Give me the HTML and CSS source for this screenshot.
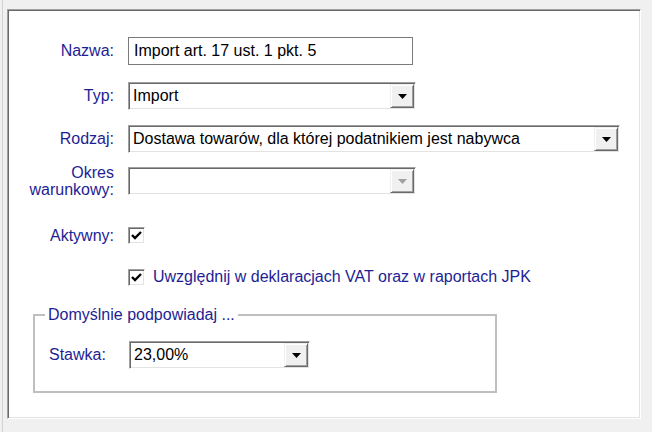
FILE: index.html
```html
<!DOCTYPE html>
<html lang="pl">
<head>
<meta charset="utf-8">
<title>Rejestr VAT</title>
<link rel="stylesheet" href="styles.css">
</head>
<body>
<div class="window">
  <div class="edge"></div>
  <div class="panel">
    <div class="form">
      <div class="lbl">Nazwa:</div>
      <div class="edit w-name">Import art. 17 ust. 1 pkt. 5</div>

      <div class="lbl">Typ:</div>
      <div class="combo w-typ">
        <span class="val">Import</span>
        <span class="btn"><svg width="9" height="5" viewBox="0 0 9 5"><polygon points="0,0 9,0 4.5,5" fill="#000"/></svg></span>
      </div>

      <div class="lbl">Rodzaj:</div>
      <div class="combo w-rodzaj">
        <span class="val">Dostawa towarów, dla której podatnikiem jest nabywca</span>
        <span class="btn"><svg width="9" height="5" viewBox="0 0 9 5"><polygon points="0,0 9,0 4.5,5" fill="#000"/></svg></span>
      </div>

      <div class="lbl two">Okres<br>warunkowy:</div>
      <div class="combo w-typ disabled">
        <span class="val"></span>
        <span class="btn"><svg width="9" height="5" viewBox="0 0 9 5"><polygon points="0,0 9,0 4.5,5" fill="#a0a0a0"/></svg></span>
      </div>

      <div class="lbl small">Aktywny:</div>
      <div class="check"><svg width="11" height="9" viewBox="0 0 11 9"><polyline points="1,4 4,7 10,1" fill="none" stroke="#000" stroke-width="2.4"/></svg></div>

      <div class="cb-row">
        <div class="check"><svg width="11" height="9" viewBox="0 0 11 9"><polyline points="1,4 4,7 10,1" fill="none" stroke="#000" stroke-width="2.4"/></svg></div>
        <span>Uwzględnij w deklaracjach VAT oraz w raportach JPK</span>
      </div>
    </div>

    <fieldset class="group">
      <legend>Domyślnie podpowiadaj ...</legend>
      <div class="group-row">
        <span class="lbl2">Stawka:</span>
        <div class="combo w-stawka">
          <span class="val">23,00%</span>
          <span class="btn"><svg width="9" height="5" viewBox="0 0 9 5"><polygon points="0,0 9,0 4.5,5" fill="#000"/></svg></span>
        </div>
      </div>
    </fieldset>
  </div>
</div>
</body>
</html>
```
FILE: styles.css
```css
* { box-sizing: border-box; }
html, body { margin: 0; padding: 0; }
body {
  background: #f0f0f0;
  font-family: "Liberation Sans", Arial, sans-serif;
  font-size: 16px;
  line-height: 18px;
  color: #000;
  width: 652px;
  height: 432px;
  overflow: hidden;
}
.window { display: flex; height: 432px; padding-left: 2px; }
.edge { width: 1px; background: #d2d2d2; }
.panel {
  margin: 9px 0 0 4px;
  width: 634px;
  height: 410px;
  background: #fff;
  border: 1px solid;
  border-color: #a0a0a0 #fff #fff #a0a0a0;
  box-shadow: inset 1px 1px 0 #696969, inset -1px -1px 0 #e3e3e3;
  padding-top: 27px;
}
.form {
  display: grid;
  grid-template-columns: 106px auto;
  grid-template-rows: 45px 43px 42px 60px 41px 17px;
  column-gap: 14px;
  justify-content: start;
  align-items: start;
}
.lbl {
  color: #1e1e94;
  height: 28px;
  display: flex;
  align-items: center;
  justify-content: flex-end;
  text-align: right;
  white-space: nowrap;
}
.lbl.two { line-height: 17px; }
.lbl.small { height: 17px; }
.edit {
  height: 28px;
  border: 1px solid #7a7a7a;
  padding-left: 5px;
  line-height: 26px;
  background: #fff;
  white-space: nowrap;
}
.w-name { width: 285px; }
.w-typ { width: 288px; }
.w-rodzaj { width: 492px; }
.w-stawka { width: 181px; }
.combo {
  display: flex;
  height: 28px;
  padding: 1px;
  border: 1px solid;
  border-color: #a0a0a0 #fff #fff #a0a0a0;
  box-shadow: inset 1px 1px 0 #696969, inset -1px -1px 0 #e3e3e3;
  background: #fff;
}
.combo .val {
  flex: 1;
  padding-left: 3px;
  line-height: 24px;
  white-space: nowrap;
  overflow: hidden;
}
.combo .btn {
  width: 24px;
  height: 24px;
  background: #f0f0f0;
  border: 1px solid;
  border-color: #f0f0f0 #696969 #696969 #f0f0f0;
  box-shadow: inset 1px 1px 0 #fff, inset -1px -1px 0 #a0a0a0;
  display: flex;
  align-items: center;
  justify-content: center;
}
.combo .btn svg { display: block; }
.check {
  width: 17px;
  height: 17px;
  border: 1px solid;
  border-color: #a0a0a0 #fff #fff #a0a0a0;
  box-shadow: inset 1px 1px 0 #696969, inset -1px -1px 0 #e3e3e3;
  background: #fff;
  display: flex;
  align-items: center;
  justify-content: center;
}
.check svg { display: block; }
.cb-row {
  grid-column: 2;
  display: flex;
  align-items: center;
  gap: 8px;
  color: #1e1e94;
  white-space: nowrap;
}
.group {
  margin: 21px 0 0 25px;
  width: 464px;
  border: 2px solid #bfbfbf;
  padding: 17px 0 22px 10px;
  min-width: 0;
}
.group legend {
  padding: 0 3px;
  color: #1e1e94;
  line-height: 18px;
}
.group-row { display: flex; align-items: center; }
.lbl2 {
  width: 84px;
  padding-left: 4px;
  color: #1e1e94;
}
```
